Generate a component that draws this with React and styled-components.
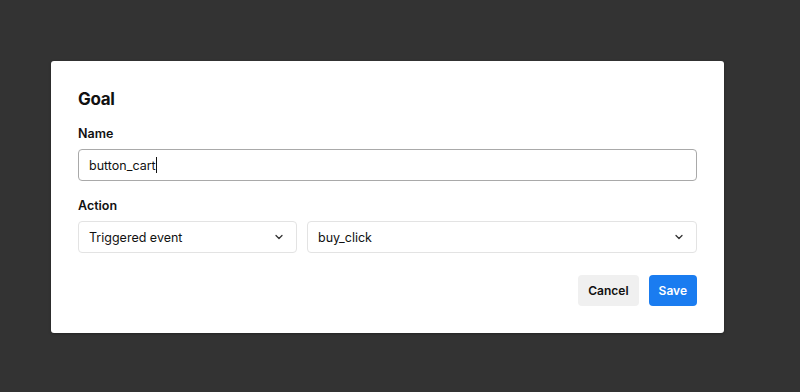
import React from "react";
import styled, { createGlobalStyle } from "styled-components";

const Global = createGlobalStyle`
  html, body { margin: 0; padding: 0; background: #333333; }
  body { font-family: Inter, "Noto Sans", "Liberation Sans", sans-serif; -webkit-font-smoothing: antialiased; }
  * { box-sizing: border-box; }
`;

const Page = styled.div`
  width: 800px;
  height: 392px;
  background: #333333;
  padding: 61px 0 0 51px;
`;

const Modal = styled.div`
  width: 673px;
  background: #ffffff;
  border-radius: 3px;
  padding: 27px;
  display: flex;
  flex-direction: column;
  box-shadow: 0 1px 3px rgba(0,0,0,0.3);
`;

const Title = styled.h2`
  margin: 0 0 15px;
  font-size: 17px;
  line-height: 22px;
  font-weight: 700;
  color: #111;
  letter-spacing: -0.3px;
`;

const Field = styled.div`
  display: flex;
  flex-direction: column;
  gap: 6px;
  margin-bottom: ${(p) => p.$mb || 0}px;
`;

const Label = styled.label`
  font-size: 12.5px;
  line-height: 18px;
  font-weight: 600;
  color: #111;
`;

const Input = styled.div`
  height: 32px;
  border: 1px solid #a9a9a9;
  border-radius: 4px;
  padding: 0 10px;
  display: flex;
  align-items: center;
  font-size: 12.5px;
  color: #111;
`;

const Caret = styled.span`
  display: inline-block;
  width: 1px;
  height: 16px;
  background: #111;
`;

const Row = styled.div`
  display: flex;
  gap: 10px;
`;

const Select = styled.div`
  height: 32px;
  width: ${(p) => (p.$w ? p.$w + "px" : "auto")};
  flex: ${(p) => (p.$w ? "none" : "1")};
  border: 1px solid #e3e3e3;
  border-radius: 4px;
  padding: 0 12px 0 10px;
  display: flex;
  align-items: center;
  justify-content: space-between;
  font-size: 12.5px;
  color: #111;
`;

const Actions = styled.div`
  display: flex;
  justify-content: flex-end;
  gap: 10px;
  margin-top: 22px;
`;

const Button = styled.button`
  height: 31px;
  border: none;
  border-radius: 4px;
  padding: 0 10px;
  font-family: inherit;
  font-size: 12px;
  font-weight: 600;
  background: ${(p) => (p.$primary ? "#1a7cf0" : "#f0f0f0")};
  color: ${(p) => (p.$primary ? "#ffffff" : "#111")};
`;

const Chevron = () => (
  <svg width="10" height="10" viewBox="0 0 10 10" fill="none">
    <path d="M2 3.5L5 6.5L8 3.5" stroke="#333" strokeWidth="1.3" strokeLinecap="round" strokeLinejoin="round" />
  </svg>
);

export default function App() {
  return (
    <Page>
      <Global />
      <Modal>
        <Title>Goal</Title>
        <Field $mb={16}>
          <Label>Name</Label>
          <Input>
            button_cart<Caret />
          </Input>
        </Field>
        <Field>
          <Label>Action</Label>
          <Row>
            <Select $w={219}>
              <span>Triggered event</span>
              <Chevron />
            </Select>
            <Select>
              <span>buy_click</span>
              <Chevron />
            </Select>
          </Row>
        </Field>
        <Actions>
          <Button>Cancel</Button>
          <Button $primary>Save</Button>
        </Actions>
      </Modal>
    </Page>
  );
}
